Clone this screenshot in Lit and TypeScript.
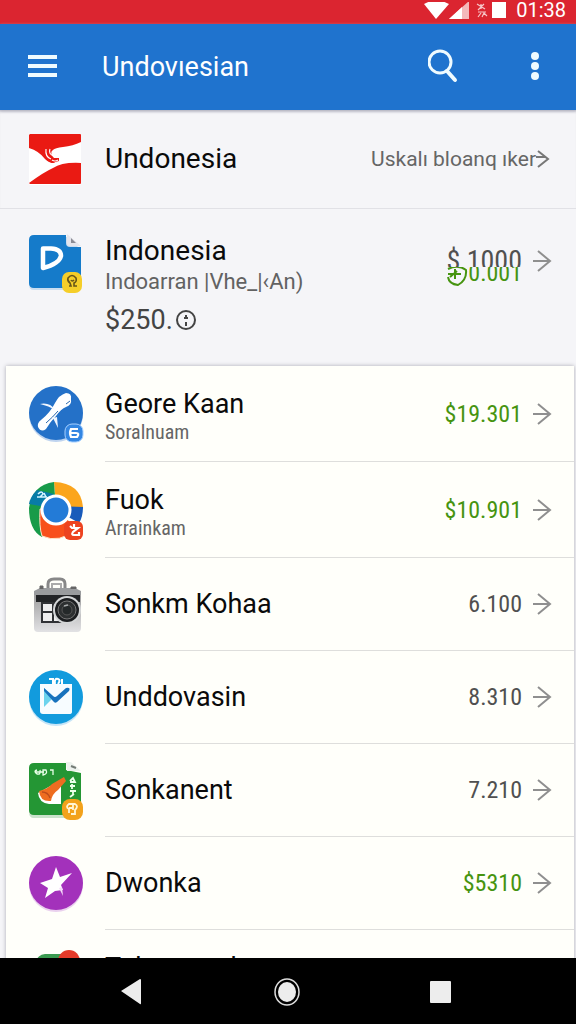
import { LitElement, html, css, nothing, TemplateResult } from "lit";
import { customElement, property } from "lit/decorators.js";

type Row = {
  name: string;
  note?: string;
  amount: string;
  positive?: boolean;
  icon: TemplateResult;
};

const flagIcon = html`<svg class="art" viewBox="0 -2 56 60" aria-hidden="true">
  <rect x="1" y="4" width="52" height="50" rx="1" fill="#fff" />
  <path d="M2 3H52Q53 3 53 4V11Q45 15 35 16Q27 17 25 19Q19 23 23 29Q26 33 30 31Q23 34 17 28Q11 20 1 17V4Z" fill="#ea1a13" />
  <path d="M53 32V52Q53 53 52 53H2L1 52Q16 41 25 37Q34 31 53 32Z" fill="#ea1a13" />
  <path d="M15 18Q14 28 24 32L31 30V27H26Q22 24 24 18Z" fill="#ea1a13" />
  <path d="M18 18Q17 26 23 28M22 18Q20 23 26 25M26 19Q24 23 31 23M24 29Q27 31 30 29" fill="none" stroke="#fff" stroke-width="1.200" />
</svg>`;

const docIcon = html`<svg class="art" viewBox="0 0 56 60" aria-hidden="true">
  <path d="M7 4H40L53 17V51Q53 57 48 57H6Q1 57 1 52V9Q1 4 7 4Z" fill="#c9ddf0" />
  <path d="M6 2H38V10Q38 14 42 14H53V50Q53 55 48 55H6Q1 55 1 50V7Q1 2 6 2Z" fill="#157bca" />
  <path d="M39 1L53 13H42Q39 13 39 10Z" fill="#e4e5ec" />
  <path d="M43 10V5L48 10Z" fill="#8b8c94" />
  <path d="M15 15.500H23Q33 16 33 23Q31 31 15 35Z" fill="none" stroke="#fff" stroke-width="4.500" stroke-linejoin="round" />
  <rect x="34" y="39" width="20" height="21" rx="7" fill="#f5ce29" />
  <path d="M41 53H43L42 50Q39 48 40 45Q44 40 48 45Q49 49 46 50L46 53H49M43 47Q44 49 46 47" fill="none" stroke="#665419" stroke-width="1.600" />
</svg>`;

const spoonIcon = html`<svg class="art" viewBox="0 0 56 60" aria-hidden="true">
  <circle cx="28" cy="31" r="27" fill="#bfd4ef" />
  <circle cx="28" cy="29" r="27" fill="#2471c8" />
  <path d="M10 43Q9 39 13 36Q22 29 27 19Q31 11 38 9Q44 9 43 15Q44 21 38 23Q33 25 28 32Q22 38 18 45Q13 49 10 43Z" fill="#fff" />
  <path d="M12 20Q22 18 27 26Q21 22 12 20ZM25 34L29 33L30 44Z" fill="#f2f7ff" />
  <path d="M18 39Q25 33 30 27" fill="none" stroke="#2967ae" stroke-width="1" />
  <path d="M38 20L42 17" fill="none" stroke="#2967ae" stroke-width="1" />
  <rect x="37" y="40" width="18" height="18" rx="7" fill="#3386e2" stroke="#a6d0ff" stroke-width="1" />
  <path d="M50 45H43Q41 49 43 53H49Q52 49 48 49H43" fill="none" stroke="#fff" stroke-width="2.200" />
</svg>`;

const ringIcon = html`<svg class="art" viewBox="0 0 56 60" aria-hidden="true">
  <path d="M26 2Q53 3 55 27H28Z" fill="#fba51c" />
  <path d="M55 27Q55 37 51 43L28 30V26Z" fill="#195bba" />
  <path d="M26 2Q4 5 1 28Q1 50 14 57L28 30Z" fill="#189b49" />
  <path d="M9 10Q2 17 1 24L18 27L26 14Z" fill="#087ca7" />
  <path d="M12 29Q11 47 14 56Q31 64 49 49L28 28Z" fill="#f8501b" stroke="#ffe5c7" stroke-width="1" />
  <circle cx="28" cy="30" r="14" fill="#237bd7" stroke="#fff" stroke-width="3" />
  <path d="M10 14Q14 10 15 14L12 17M16 13L18 17M9 17H19" fill="none" stroke="#d6f5ff" stroke-width="1.500" />
  <rect x="36" y="41" width="19" height="19" rx="6" fill="#ed431f" />
  <path d="M42 46L44 48H50L45 52Q43 55 46 55H51V52M46 44V48" fill="none" stroke="#fff" stroke-width="2.200" />
</svg>`;

const cameraIcon = html`<svg class="art" viewBox="0 0 56 60" aria-hidden="true">
  <defs>
    <linearGradient id="metal" x2="0" y2="1"><stop stop-color="#999" /><stop offset="1" stop-color="#e2e2e4" /></linearGradient>
  </defs>
  <path d="M20 14V9Q20 4 26 4H32Q37 4 37 9V14" fill="none" stroke="#888" stroke-width="3" />
  <path d="M24 14V9H33V14" fill="none" stroke="#aaa" stroke-width="2" />
  <rect x="6" y="17" width="47" height="40" rx="4" fill="url(#metal)" />
  <path d="M6 20V16L12 13H47L53 16V20Z" fill="#9a9c9e" />
  <path d="M12 14V11H15V14M43 14V12H48V14" fill="#666" stroke="#666" />
  <rect x="8" y="20" width="44" height="7" fill="#222426" />
  <path d="M13 27H38V48H13Z" fill="#303235" />
  <path d="M15 29H24V36H15ZM15 38H24V46H15ZM26 29H32V46H26Z" fill="#eee" />
  <circle cx="39" cy="35" r="14" fill="#d4d6d7" />
  <circle cx="39" cy="35" r="12" fill="#1c1e20" />
  <circle cx="39" cy="35" r="9" fill="#2d3031" stroke="#777" />
  <circle cx="39" cy="35" r="5" fill="#242829" stroke="#555" />
  <path d="M36 31L40 30" stroke="#a8abac" stroke-width="1.500" />
</svg>`;

const bagIcon = html`<svg class="art" viewBox="0 0 56 60" aria-hidden="true">
  <circle cx="28" cy="31" r="27" fill="#c6e5f7" />
  <circle cx="28" cy="29" r="27" fill="#129bdd" />
  <path d="M21 11H25V16M27 16Q26 10 30 11Q33 12 30 16M34 11V16" fill="none" stroke="#fff" stroke-width="2" />
  <path d="M12 16H44V44Q44 46 41 46H15Q12 46 12 43Z" fill="#f7fcff" />
  <path d="M16 20L26 29L16 39Z" fill="#6cd3ed" />
  <path d="M16 20L25 28Q27 30 29 28L38 20Q43 19 41 23L29 34Q27 36 25 33L16 23Z" fill="#1872bd" />
</svg>`;

const sheetIcon = html`<svg class="art" viewBox="0 0 56 60" aria-hidden="true">
  <path d="M7 4H38V13H53V49Q53 57 48 57H6Q1 57 1 51V9Z" fill="#cae2cb" />
  <path d="M6 2H38V9L53 12V49Q53 54 48 54H6Q1 54 1 49V7Q1 2 6 2Z" fill="#249634" />
  <path d="M38 1H43L53 10H39Z" fill="#edf2ed" />
  <path d="M43 5L48 7" stroke="#747c75" stroke-width="2" />
  <path d="M10 32Q11 42 21 43H33V19Z" fill="#fff" />
  <path d="M11 30Q20 28 24 23L36 16L38 20L30 29Q24 33 23 40Q12 41 11 30Z" fill="#ee6d21" />
  <path d="M14 31Q20 31 22 37" fill="none" stroke="#bd4c1c" stroke-width="1.300" />
  <path d="M9 9Q5 10 9 13Q13 14 12 9M15 9V14Q20 13 18 9ZM22 9H25V14M7 11H16" fill="none" stroke="#e8ffe8" stroke-width="1.300" />
  <path d="M42 20L45 17L47 21H42M42 25H47M44 23V28M42 30H48M45 30V34M42 36L46 33" fill="none" stroke="#eaffeb" stroke-width="1.800" />
  <rect x="34" y="38" width="21" height="21" rx="8" fill="#f3a21b" />
  <path d="M41 52V48Q37 46 41 43H47Q51 45 47 49V53H43M41 47H45M45 44V49" fill="none" stroke="#fff5d5" stroke-width="1.800" />
</svg>`;

const starIcon = html`<svg class="art" viewBox="0 0 56 60" aria-hidden="true">
  <circle cx="28" cy="31" r="27" fill="#ead1ee" />
  <circle cx="28" cy="29" r="27" fill="#a331bb" />
  <path d="M28 13L32 23L44 19L33 31L35 36L27 37L17 44L20 34L12 29L24 25Z" fill="#fff" />
  <path d="M31 34L34 33L35 42Z" fill="#f5dcfa" />
</svg>`;

const chipIcon = html`<svg class="art" viewBox="0 0 56 60" aria-hidden="true">
  <rect x="8" y="6" width="34" height="46" rx="9" fill="#3a9a50" />
  <circle cx="41" cy="13" r="11" fill="#e43a29" />
</svg>`;

const arrow = html`<svg class="arrow" viewBox="0 0 20 24" aria-hidden="true">
  <path d="M1 12H18M6 2L18 12L6 22" fill="none" stroke="#8f8f8f" stroke-width="2" />
</svg>`;

const rows: Row[] = [
  { name: "Geore Kaan", note: "Soralnuam", amount: "$19.301", positive: true, icon: spoonIcon },
  { name: "Fuok", note: "Arrainkam", amount: "$10.901", positive: true, icon: ringIcon },
  { name: "Sonkm Kohaa", amount: "6.100", icon: cameraIcon },
  { name: "Unddovasin", amount: "8.310", icon: bagIcon },
  { name: "Sonkanent", amount: "7.210", icon: sheetIcon },
  { name: "Dwonka", amount: "$5310", positive: true, icon: starIcon },
  { name: "Tokanesad", note: "Soranam", amount: "", icon: chipIcon },
];

const shared = css`
  * { box-sizing: border-box; }
  button, a { font: inherit; color: inherit; background: none; border: 0; padding: 0; text-decoration: none; }
  svg { display: block; flex: none; }
  .art { width: 56px; height: 60px; }
  .arrow { width: 20px; height: 24px; }
  .name { font-size: 28px; line-height: 32px; color: #0a0a0a; }
  .amount { font-family: "Roboto Condensed", "Liberation Sans Narrow", Roboto, sans-serif; font-size: 24px; line-height: 32px; color: #505050; }
  .positive { color: #469410; }
`;

@customElement("entry-row")
export class EntryRow extends LitElement {
  static styles = [shared, css`
    :host { display: block; }
    .row { display: flex; align-items: stretch; padding-left: 22px; height: 93px; }
    .tall { height: 96px; }
    .tall .text { padding-top: 4px; }
    .art { align-self: center; }
    .body { flex: 1; display: flex; align-items: center; margin-left: 21px; padding-right: 22px; border-bottom: 1px solid #dededc; }
    .text { flex: 1; }
    .name { font-size: 27px; }
    .note { font-family: "Roboto Condensed", Roboto, sans-serif; font-size: 20px; line-height: 24px; color: #666; }
    .arrow { margin-left: 10px; }
  `];

  @property({ attribute: false }) row!: Row;

  render() {
    const r = this.row;
    return html`<a class="row ${r.note ? "tall" : ""}" href="#">
      ${r.icon}
      <div class="body">
        <div class="text">
          <div class="name">${r.name}</div>
          ${r.note ? html`<div class="note">${r.note}</div>` : nothing}
        </div>
        <span class="amount ${r.positive ? "positive" : ""}">${r.amount}</span>
        ${arrow}
      </div>
    </a>`;
  }
}

@customElement("app-root")
export class AppRoot extends LitElement {
  static styles = [shared, css`
    :host { display: flex; flex-direction: column; height: 100vh; overflow: hidden; background: #f5f5f8; font-family: Roboto, sans-serif; }
    .status { flex: none; display: flex; justify-content: flex-end; align-items: center; height: 24px; padding-right: 10px; background: #db2530; color: #fff; font-size: 20px; line-height: 20px; }
    .signals { width: 84px; height: 20px; margin-right: 8px; }
    .clock { padding-bottom: 4px; }
    .bar { flex: none; display: flex; align-items: center; height: 86px; padding: 0 26px; background: #1f73ce; color: #fff; box-shadow: 0 1px 3px #a8a8b8; }
    .bar h1 { flex: 1; margin: 0 0 0 44px; font-size: 27px; line-height: 32px; font-weight: 400; }
    .menu { width: 32px; height: 32px; }
    .find { width: 32px; height: 36px; margin-right: 60px; }
    .more { width: 30px; height: 36px; }
    main { flex: 1; min-height: 0; overflow: hidden; }
    .account { display: flex; align-items: center; height: 99px; padding: 0 26px 0 28px; border-bottom: 1px solid #e1e1e6; box-shadow: inset 0 3px 3px -2px #b8b8c4; }
    .account .name { flex: 1; margin-left: 21px; }
    .hint { display: flex; align-items: center; font-size: 21px; line-height: 28px; color: #666; }
    .chev { width: 14px; height: 24px; }
    .wallet { display: flex; align-items: flex-start; height: 157px; padding: 24px 24px 0 28px; }
    .info { flex: 1; margin-left: 21px; padding-top: 2px; }
    .sub { font-size: 22px; line-height: 30px; color: #626262; }
    .total { display: flex; align-items: center; gap: 2px; font-size: 27px; line-height: 46px; color: #444; }
    .total svg { width: 22px; height: 24px; }
    .stack { position: relative; margin-top: 12px; }
    .stack .amount { display: block; font-size: 28px; }
    .stack .over { position: absolute; right: 0; top: 12px; font-size: 24px; clip-path: inset(10px 0 0 0); background: #f5f5f8; display: flex; align-items: center; }
    .over svg { width: 22px; height: 32px; }
    .wallet .arrow { margin: 16px 0 0 10px; }
    .card { margin: 0 2px 0 6px; background: #fffffa; box-shadow: 0 0 4px #a9a9b2; }
    .nav { flex: none; display: flex; align-items: center; justify-content: space-between; height: 66px; padding: 0 120px 0 116px; background: #000; }
    .nav svg { width: 30px; height: 32px; }
  `];

  render() {
    return html`
      <div class="status">
        <svg class="signals" viewBox="0 0 84 20" aria-hidden="true">
          <path d="M0 2Q12 -5 25 2L12 17Z" fill="#fff" />
          <path d="M25 17L45 -1V17Z" fill="#f4b8bb" /><path d="M25 17L38 5V17Z" fill="#fff" />
          <path d="M53 2L61 7M60 2L54 8M57 2V7M54 10H62M54 15L57 11M58 15L60 11L63 14" fill="none" stroke="#f7c5c8" stroke-width="1.200" />
          <rect x="68" y="0" width="14" height="16" fill="#fff" />
        </svg>
        <span class="clock">01:38</span>
      </div>
      <header class="bar">
        <button class="menu" aria-label="Menu"><svg viewBox="0 0 32 32"><path d="M2 6H31M2 15H31M2 24H31" stroke="#effbff" stroke-width="4" /></svg></button>
        <h1>Undovıesian</h1>
        <button class="find" aria-label="Search"><svg viewBox="0 0 32 36"><circle cx="12" cy="13" r="11" fill="none" stroke="#effbff" stroke-width="3" /><path d="M19 22L27 31" stroke="#effbff" stroke-width="4" stroke-linecap="round" /></svg></button>
        <button class="more" aria-label="More"><svg viewBox="0 0 30 36"><g fill="#effbff"><circle cx="15" cy="7" r="4" /><circle cx="15" cy="17" r="4" /><circle cx="15" cy="27" r="4" /></g></svg></button>
      </header>
      <main>
        <a class="account" href="#">
          ${flagIcon}
          <span class="name">Undonesia</span>
          <span class="hint">Uskalı bloanq ıker<svg class="chev" viewBox="0 0 14 24"><path d="M0 10H10M2 4L12 12L2 20" fill="none" stroke="#777" stroke-width="2" /></svg></span>
        </a>
        <a class="wallet" href="#">
          ${docIcon}
          <div class="info">
            <div class="name">Indonesia</div>
            <div class="sub">Indoarran |Vhe_|‹An)</div>
            <div class="total">$250.<svg viewBox="0 0 22 24"><circle cx="11" cy="12" r="9" fill="none" stroke="#444" stroke-width="2" /><path d="M11 7V11M11 14V18M9 10H13" stroke="#444" stroke-width="2" /></svg></div>
          </div>
          <div class="stack">
            <span class="amount">$ 1000</span>
            <span class="amount positive over"><svg viewBox="0 0 22 32"><path d="M2 12Q12 7 20 13Q21 23 12 28Q3 27 2 20M2 17H15M9 12V22M4 20L11 14" fill="none" stroke="#469410" stroke-width="2" /></svg>0.001</span>
          </div>
          ${arrow}
        </a>
        <section class="card">${rows.map((r) => html`<entry-row .row=${r}></entry-row>`)}</section>
      </main>
      <nav class="nav">
        <button aria-label="Back"><svg viewBox="0 0 30 32"><path d="M5 16L24 4Q25 4 25 5V28Q25 30 24 29Z" fill="#ededed" /></svg></button>
        <button aria-label="Home"><svg viewBox="0 0 30 32"><ellipse cx="16" cy="17" rx="12" ry="13" fill="none" stroke="#ddd" stroke-width="1.500" /><ellipse cx="16" cy="17" rx="9" ry="10" fill="#ededed" /></svg></button>
        <button aria-label="Recent"><svg viewBox="0 0 30 32"><rect x="4" y="6" width="21" height="22" rx="1" fill="#ededed" /></svg></button>
      </nav>
    `;
  }
}
